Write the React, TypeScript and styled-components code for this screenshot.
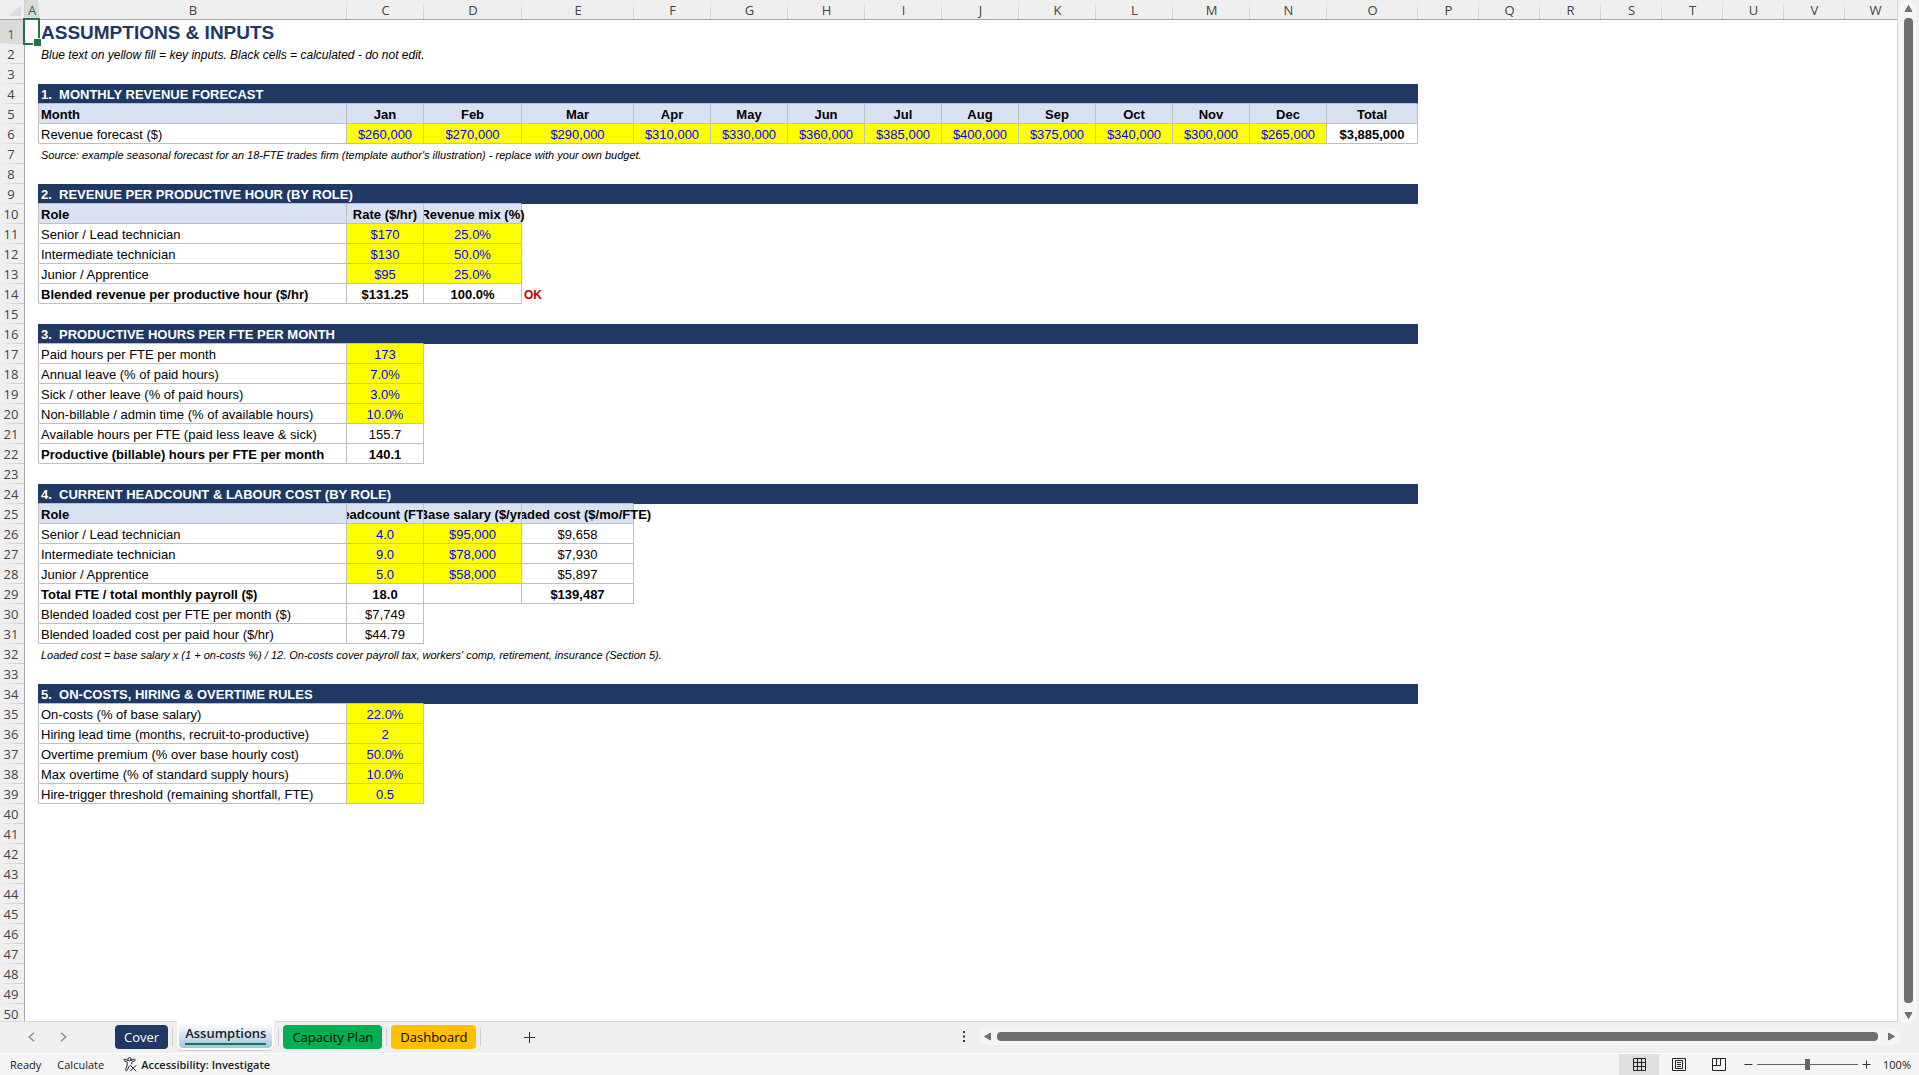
import React, { useState } from "react";
import styled, { createGlobalStyle, css } from "styled-components";

const NAVY = "#203864";
const LINE = "#bfbfbf";
const UI_FONT = '"Open Sans", "Noto Sans", sans-serif';
const CELL_FONT = '"Liberation Sans", Arial, sans-serif';

const GlobalStyle = createGlobalStyle`
  * { box-sizing: border-box; }
  body { margin: 0; background: #efefef; }
  button { font: inherit; color: inherit; border: 0; padding: 0; background: none; }
`;

/* ---------- sheet data ---------- */

type Kind = "label" | "total" | "head" | "headLeft" | "input" | "calc" | "calcBold";
type CellData = { text: string; kind: Kind; bleed?: boolean };
type RowData = {
  cells?: CellData[];
  band?: string;
  title?: string;
  subtitle?: string;
  note?: string;
  flag?: string;
};

const COLUMNS: [string, number][] = [
  ["A", 14], ["B", 308], ["C", 77], ["D", 98], ["E", 112], ["F", 77], ["G", 77], ["H", 77],
  ["I", 77], ["J", 77], ["K", 77], ["L", 77], ["M", 77], ["N", 77], ["O", 91], ["P", 61],
  ["Q", 61], ["R", 61], ["S", 61], ["T", 61], ["U", 61], ["V", 61], ["W", 61],
];
const ROW_COUNT = 50;
const BAND_SPAN = 14;

const label = (text: string): CellData => ({ text, kind: "label" });
const total = (text: string): CellData => ({ text, kind: "total" });
const head = (text: string, bleed = false): CellData => ({ text, kind: "head", bleed });
const headLeft = (text: string): CellData => ({ text, kind: "headLeft" });
const input = (text: string): CellData => ({ text, kind: "input" });
const calc = (text: string): CellData => ({ text, kind: "calc" });
const calcBold = (text: string): CellData => ({ text, kind: "calcBold" });

const ROWS: Record<number, RowData> = {
  1: { title: "ASSUMPTIONS & INPUTS" },
  2: { subtitle: "Blue text on yellow fill = key inputs. Black cells = calculated - do not edit." },
  4: { band: "1.  MONTHLY REVENUE FORECAST" },
  5: {
    cells: [
      headLeft("Month"),
      ...["Jan", "Feb", "Mar", "Apr", "May", "Jun", "Jul", "Aug", "Sep", "Oct", "Nov", "Dec", "Total"].map((m) => head(m)),
    ],
  },
  6: {
    cells: [
      label("Revenue forecast ($)"),
      ...[260, 270, 290, 310, 330, 360, 385, 400, 375, 340, 300, 265].map((n) => input(`$${n},000`)),
      calcBold("$3,885,000"),
    ],
  },
  7: { note: "Source: example seasonal forecast for an 18-FTE trades firm (template author's illustration) - replace with your own budget." },
  9: { band: "2.  REVENUE PER PRODUCTIVE HOUR (BY ROLE)" },
  10: { cells: [headLeft("Role"), head("Rate ($/hr)"), head("Revenue mix (%)", true)] },
  11: { cells: [label("Senior / Lead technician"), input("$170"), input("25.0%")] },
  12: { cells: [label("Intermediate technician"), input("$130"), input("50.0%")] },
  13: { cells: [label("Junior / Apprentice"), input("$95"), input("25.0%")] },
  14: { cells: [total("Blended revenue per productive hour ($/hr)"), calcBold("$131.25"), calcBold("100.0%")], flag: "OK" },
  16: { band: "3.  PRODUCTIVE HOURS PER FTE PER MONTH" },
  17: { cells: [label("Paid hours per FTE per month"), input("173")] },
  18: { cells: [label("Annual leave (% of paid hours)"), input("7.0%")] },
  19: { cells: [label("Sick / other leave (% of paid hours)"), input("3.0%")] },
  20: { cells: [label("Non-billable / admin time (% of available hours)"), input("10.0%")] },
  21: { cells: [label("Available hours per FTE (paid less leave & sick)"), calc("155.7")] },
  22: { cells: [total("Productive (billable) hours per FTE per month"), calcBold("140.1")] },
  24: { band: "4.  CURRENT HEADCOUNT & LABOUR COST (BY ROLE)" },
  25: { cells: [headLeft("Role"), head("Headcount (FTE)"), head("Base salary ($/yr)"), head("Loaded cost ($/mo/FTE)", true)] },
  26: { cells: [label("Senior / Lead technician"), input("4.0"), input("$95,000"), calc("$9,658")] },
  27: { cells: [label("Intermediate technician"), input("9.0"), input("$78,000"), calc("$7,930")] },
  28: { cells: [label("Junior / Apprentice"), input("5.0"), input("$58,000"), calc("$5,897")] },
  29: { cells: [total("Total FTE / total monthly payroll ($)"), calcBold("18.0"), calc(""), calcBold("$139,487")] },
  30: { cells: [label("Blended loaded cost per FTE per month ($)"), calc("$7,749")] },
  31: { cells: [label("Blended loaded cost per paid hour ($/hr)"), calc("$44.79")] },
  32: { note: "Loaded cost = base salary x (1 + on-costs %) / 12. On-costs cover payroll tax, workers' comp, retirement, insurance (Section 5)." },
  34: { band: "5.  ON-COSTS, HIRING & OVERTIME RULES" },
  35: { cells: [label("On-costs (% of base salary)"), input("22.0%")] },
  36: { cells: [label("Hiring lead time (months, recruit-to-productive)"), input("2")] },
  37: { cells: [label("Overtime premium (% over base hourly cost)"), input("50.0%")] },
  38: { cells: [label("Max overtime (% of standard supply hours)"), input("10.0%")] },
  39: { cells: [label("Hire-trigger threshold (remaining shortfall, FTE)"), input("0.5")] },
};

/* ---------- layout ---------- */

const Shell = styled.div`
  display: flex;
  flex-direction: column;
  height: 100vh;
  overflow: hidden;
  background: #efefef;
  font-family: ${UI_FONT};
`;

const Workspace = styled.main`
  display: flex;
  flex: 1;
  min-height: 0;
`;

const SheetView = styled.div`
  flex: 1;
  min-width: 0;
  overflow: hidden;
  background: #fff;
  border-right: 1px solid #d9d9d9;
  border-bottom: 1px solid #d9d9d9;
`;

const Grid = styled.table`
  table-layout: fixed;
  width: 0;
  border-collapse: separate;
  border-spacing: 0;
`;

const Corner = styled.td`
  height: 20px;
  padding: 5px 3px 3px 9px;
  background: #efefef;
  border-right: 1px solid #d0d0d0;
  border-bottom: 1px solid #a6a6a6;
  line-height: 0;
`;

const ColumnHead = styled.th<{ $active?: boolean }>`
  height: 20px;
  padding: 1px 0 0;
  font-size: 13px;
  font-weight: 400;
  line-height: 18px;
  text-align: center;
  color: ${(p) => (p.$active ? "#217346" : "#444")};
  background:
    linear-gradient(#efefef, #c8c8c8) right / 1px 100% no-repeat,
    ${(p) => (p.$active ? "#dadada" : "#efefef")};
  border-bottom: 1px solid #a6a6a6;
`;

const RowHead = styled.th<{ $active?: boolean }>`
  padding: 0 2px 1px 0;
  font-size: 13px;
  font-weight: 400;
  line-height: 18px;
  text-align: center;
  vertical-align: bottom;
  color: ${(p) => (p.$active ? "#217346" : "#444")};
  background:
    linear-gradient(90deg, #efefef, #c8c8c8) bottom / 100% 1px no-repeat,
    ${(p) => (p.$active ? "#dadada" : "#efefef")};
  border-right: 1px solid #a6a6a6;
`;

const kindStyles: Record<Kind, ReturnType<typeof css>> = {
  label: css``,
  total: css`font-weight: 700;`,
  headLeft: css`font-weight: 700; background: #d9e1f2;`,
  head: css`padding-left: 0; font-weight: 700; background: #d9e1f2;`,
  input: css`padding-left: 0; color: #0000ff; background: #ffff00;`,
  calc: css`padding-left: 0;`,
  calcBold: css`padding-left: 0; font-weight: 700;`,
};

const Cell = styled.td<{ $kind?: Kind; $right?: string; $bottom?: string }>`
  position: relative;
  height: 20px;
  padding: 2px 0 0 2px;
  font-family: ${CELL_FONT};
  font-size: 13px;
  line-height: 17px;
  white-space: pre;
  color: #000;
  border-right: 1px solid ${(p) => p.$right ?? "transparent"};
  border-bottom: 1px solid ${(p) => p.$bottom ?? "transparent"};
  ${(p) => p.$kind && kindStyles[p.$kind]}
`;

const Centered = styled.span<{ $bleed?: boolean }>`
  display: flex;
  justify-content: center;
  clip-path: inset(0 ${(p) => (p.$bleed ? "-60px" : "0")} 0 0);
`;

const BandCell = styled(Cell)`
  font-weight: 700;
  color: #fff;
  background: ${NAVY};
`;

const TitleCell = styled(Cell)`
  height: 24px;
  padding-top: 2px;
  font-size: 19px;
  font-weight: 700;
  line-height: 21px;
  color: ${NAVY};
`;

const SubtitleCell = styled(Cell)`
  padding-top: 3px;
  font-size: 12px;
  font-style: italic;
  line-height: 16px;
`;

const NoteCell = styled(Cell)`
  padding-top: 3px;
  font-size: 11px;
  font-style: italic;
  line-height: 16px;
`;

const FlagCell = styled(Cell)`
  padding-top: 3px;
  font-size: 12px;
  font-weight: 700;
  line-height: 16px;
  color: #c00000;
`;

const Selection = styled.span`
  position: absolute;
  inset: -2px;
  z-index: 1;
  border: 2px solid #217346;

  &::after {
    content: "";
    position: absolute;
    right: -4px;
    bottom: -4px;
    width: 7px;
    height: 7px;
    background: #217346;
    border: 1px solid #fff;
  }
`;

/* ---------- scroll bars ---------- */

const ScrollTrack = styled.div<{ $vertical?: boolean }>`
  display: flex;
  flex-direction: ${(p) => (p.$vertical ? "column" : "row")};
  align-items: center;
  justify-content: space-between;
  gap: 5px;
  padding: ${(p) => (p.$vertical ? "4px 0" : "0 4px")};
  background: #f5f5f5;
  border-radius: 9px;
  ${(p) => (p.$vertical ? css`width: 18px; margin: 0 2px 0 1px;` : css`height: 17px; flex: 1;`)}
`;

const VerticalRail = styled.div`
  display: flex;
  margin-bottom: -2px;
`;

const Thumb = styled.div<{ $vertical?: boolean }>`
  flex: 1;
  background: #707070;
  border-radius: 4px;
  ${(p) => (p.$vertical ? css`width: 9px; margin-bottom: 3px;` : css`height: 9px; margin-right: 4px;`)}
`;

const ArrowButton = styled.button`
  display: flex;
  align-items: center;
  justify-content: center;
  width: 9px;
  height: 9px;
`;

/* ---------- tab bar ---------- */

const TabBar = styled.nav`
  display: flex;
  align-items: flex-start;
  height: 31px;
  padding-right: 19px;
  color: #222;
`;

const TabNav = styled.div`
  display: flex;
  align-items: center;
  gap: 16px;
  width: 115px;
  height: 30px;
  padding-left: 23px;
`;

const NavButton = styled.button`
  display: flex;
  align-items: center;
  justify-content: center;
  width: 16px;
  height: 20px;
`;

const AddButton = styled(NavButton)`
  height: 30px;
`;

const Tabs = styled.div`
  display: flex;
  align-items: flex-start;
`;

const Tab = styled.button<{ $fill: string; $ink: string }>`
  height: 24px;
  margin-top: 3px;
  padding: 0 9px;
  font-size: 13px;
  line-height: 24px;
  white-space: nowrap;
  color: ${(p) => p.$ink};
  background: ${(p) => p.$fill};
  border-radius: 4px;
`;

const ActiveTab = styled.button`
  position: relative;
  height: 29px;
  margin-top: -1px;
  padding: 2px 6px 3px;
  font-size: 13px;
  font-weight: 600;
  line-height: 20px;
  white-space: nowrap;
  color: #222;
  background: linear-gradient(#fff 10%, #9dc3e6) padding-box, #fff;
  border: 2px solid #fff;
  border-top: 0;
  border-radius: 0 0 6px 6px;
  box-shadow: 0 1px 1px #cfcfcf;

  span {
    display: block;
    border-bottom: 2px solid #107c41;
  }
`;

const TabDivider = styled.span<{ $wide?: boolean }>`
  width: 1px;
  height: 18px;
  margin: 6px ${(p) => (p.$wide ? "40px" : "4px")} 0 4px;
  background: #cfcfcf;
`;

const Spacer = styled.div`
  flex: 1;
`;

const HorizontalRail = styled.div`
  display: flex;
  align-items: center;
  gap: 14px;
  width: calc(50% - 13px);
  height: 29px;
`;

/* ---------- status bar ---------- */

const StatusBar = styled.footer`
  display: flex;
  align-items: center;
  height: 22px;
  padding: 0 8px 0 10px;
  font-size: 11px;
  line-height: 20px;
  color: #222;
  background: #f4f4f4;
  border-top: 1px solid #fff;
`;

const StatusText = styled.span`
  margin-right: 16px;
`;

const AccessibilityButton = styled.button`
  display: flex;
  align-items: center;
  gap: 3px;
  margin-left: 3px;
  font-weight: 600;
`;

const ViewButton = styled.button<{ $active?: boolean }>`
  display: flex;
  align-items: center;
  justify-content: center;
  width: 40px;
  height: 21px;
  background: ${(p) => (p.$active ? "#dedede" : "transparent")};
`;

const ZoomControls = styled.div`
  display: flex;
  align-items: center;
  gap: 4px;
  margin-left: 5px;
`;

const ZoomSlider = styled.input`
  appearance: none;
  width: 101px;
  height: 21px;
  margin: 0;
  background: linear-gradient(#666, #666) center / 100% 1px no-repeat;

  &::-webkit-slider-thumb {
    appearance: none;
    width: 5px;
    height: 11px;
    background: #666;
  }
`;

const ZoomValue = styled.button`
  width: 36px;
  font-size: 11px;
  text-align: right;
`;

/* ---------- pieces ---------- */

type Direction = "up" | "down" | "left" | "right";
const ARROWS: Record<Direction, string> = {
  up: "M4.5 1.5 L8 7.5 L1 7.5 Z",
  down: "M1 1.5 L8 1.5 L4.5 7.5 Z",
  left: "M7.5 1 L7.5 8 L1.5 4.5 Z",
  right: "M1.5 1 L7.5 4.5 L1.5 8 Z",
};

function ScrollArrow({ direction }: { direction: Direction }) {
  return (
    <ArrowButton aria-label={`Scroll ${direction}`}>
      <svg width="9" height="9" viewBox="0 0 9 9">
        <path d={ARROWS[direction]} fill="#707070" stroke="#707070" strokeLinejoin="round" />
      </svg>
    </ArrowButton>
  );
}

const isLeftAligned = (kind: Kind) => kind === "label" || kind === "total" || kind === "headLeft";

function RowContent({ row, next }: { row: RowData; next: RowData }) {
  if (row.band) {
    // Columns with a table below get its grey top rule; the rest of the band stays solid.
    const lined = next.cells?.length ?? 1;
    return (
      <>
        <BandCell colSpan={lined} $bottom={LINE} $right={NAVY}>{row.band}</BandCell>
        {lined < BAND_SPAN && <BandCell colSpan={BAND_SPAN - lined} $bottom={NAVY} $right={NAVY} />}
      </>
    );
  }
  if (row.title) return <TitleCell colSpan={BAND_SPAN}>{row.title}</TitleCell>;
  if (row.subtitle) return <SubtitleCell colSpan={BAND_SPAN}>{row.subtitle}</SubtitleCell>;
  if (row.note) return <NoteCell colSpan={BAND_SPAN}>{row.note}</NoteCell>;
  if (row.cells) {
    return (
      <>
        {row.cells.map((cell, i) => (
          <Cell key={i} $kind={cell.kind} $right={LINE} $bottom={LINE}>
            {isLeftAligned(cell.kind) ? cell.text : <Centered $bleed={cell.bleed}>{cell.text}</Centered>}
          </Cell>
        ))}
        {row.flag && <FlagCell>{row.flag}</FlagCell>}
      </>
    );
  }
  return <Cell colSpan={BAND_SPAN} />;
}

function SheetRow({ index }: { index: number }) {
  const row = ROWS[index] ?? {};
  const next = ROWS[index + 1] ?? {};
  const edge = row.band ? NAVY : row.cells ? LINE : undefined;
  return (
    <tr>
      <RowHead scope="row" $active={index === 1}>{index}</RowHead>
      <Cell $right={edge}>{index === 1 && <Selection />}</Cell>
      <RowContent row={row} next={next} />
    </tr>
  );
}

function AccessibilityIcon() {
  return (
    <svg width="15" height="15" viewBox="0 0 15 15" fill="none" stroke="#222" strokeLinecap="round" strokeLinejoin="round">
      <circle cx="6.5" cy="2.2" r="1.6" />
      <path d="M4.8 3.4 L2 2.2 C.8 1.9 .4 3.4 1.4 3.8 L4.2 5.2 V8 L2.6 12.4 C2.4 13.8 3.8 14.2 4.3 13.1 L6.4 9" />
      <path d="M8.2 3.4 L11 2.2 C12.2 1.9 12.6 3.4 11.6 3.8 L8.8 5.2 V7" />
      <path d="M7.5 8.5 L13 14 M13 8.5 L7.5 14" />
    </svg>
  );
}

export default function App() {
  const [zoom, setZoom] = useState(100);
  const rows = Array.from({ length: ROW_COUNT }, (_, i) => i + 1);

  return (
    <Shell>
      <GlobalStyle />
      <Workspace>
        <SheetView>
          <Grid>
            <colgroup>
              <col width={25} />
              {COLUMNS.map(([name, width]) => <col key={name} width={width} />)}
            </colgroup>
            <thead>
              <tr>
                <Corner>
                  <svg width="12" height="11" viewBox="0 0 12 11"><path d="M12 0 V11 H0 Z" fill="#dcdcdc" /></svg>
                </Corner>
                {COLUMNS.map(([name]) => (
                  <ColumnHead key={name} scope="col" $active={name === "A"}>{name}</ColumnHead>
                ))}
              </tr>
            </thead>
            <tbody>
              {rows.map((n) => <SheetRow key={n} index={n} />)}
            </tbody>
          </Grid>
        </SheetView>
        <VerticalRail>
          <ScrollTrack $vertical>
            <ScrollArrow direction="up" />
            <Thumb $vertical />
            <ScrollArrow direction="down" />
          </ScrollTrack>
        </VerticalRail>
      </Workspace>

      <TabBar aria-label="Sheets">
        <TabNav>
          <NavButton aria-label="Previous sheet">
            <svg width="7" height="10" viewBox="0 0 7 10" fill="none" stroke="#8a8a8a" strokeWidth="1.3"><path d="M6 .8 L1.2 5 L6 9.2" /></svg>
          </NavButton>
          <NavButton aria-label="Next sheet">
            <svg width="7" height="10" viewBox="0 0 7 10" fill="none" stroke="#8a8a8a" strokeWidth="1.3"><path d="M1 .8 L5.8 5 L1 9.2" /></svg>
          </NavButton>
        </TabNav>
        <Tabs>
          <Tab $fill={NAVY} $ink="#fff">Cover</Tab>
          <TabDivider />
          <ActiveTab aria-current="page"><span>Assumptions</span></ActiveTab>
          <TabDivider />
          <Tab $fill="#00b050" $ink="#000">Capacity Plan</Tab>
          <TabDivider />
          <Tab $fill="#ffc000" $ink="#000">Dashboard</Tab>
          <TabDivider $wide />
        </Tabs>
        <AddButton aria-label="New sheet">
          <svg width="11" height="11" viewBox="0 0 11 11" stroke="#333"><path d="M5.5 0 V11 M0 5.5 H11" /></svg>
        </AddButton>
        <Spacer />
        <HorizontalRail>
          <svg width="2" height="11" viewBox="0 0 2 11" fill="#333"><path d="M0 0h2v2H0zM0 4.5h2v2H0zM0 9h2v2H0z" /></svg>
          <ScrollTrack>
            <ScrollArrow direction="left" />
            <Thumb />
            <ScrollArrow direction="right" />
          </ScrollTrack>
        </HorizontalRail>
      </TabBar>

      <StatusBar>
        <StatusText>Ready</StatusText>
        <StatusText>Calculate</StatusText>
        <AccessibilityButton><AccessibilityIcon />Accessibility: Investigate</AccessibilityButton>
        <Spacer />
        <ViewButton $active aria-label="Normal view">
          <svg width="13" height="13" viewBox="0 0 13 13" fill="none" stroke="#222"><path d="M.5 .5h12v12H.5zM4.5 .5v12M8.5 .5v12M.5 4.5h12M.5 8.5h12" /></svg>
        </ViewButton>
        <ViewButton aria-label="Page layout view">
          <svg width="14" height="13" viewBox="0 0 14 13" fill="none" stroke="#222"><path d="M.5 .5h13v12H.5zM3.5 2.5h7v8h-7zM5 4.5h4M5 6.5h4M5 8.5h4" /></svg>
        </ViewButton>
        <ViewButton aria-label="Page break preview">
          <svg width="14" height="13" viewBox="0 0 14 13" fill="none" stroke="#222"><path d="M.5 .5h13v12H.5zM.5 7.5h8v-7M4.5 .5v7" /></svg>
        </ViewButton>
        <ZoomControls>
          <ArrowButton aria-label="Zoom out" onClick={() => setZoom((z) => Math.max(10, z - 10))}>
            <svg width="9" height="9" viewBox="0 0 9 9" stroke="#333"><path d="M.5 4.5h8" /></svg>
          </ArrowButton>
          <ZoomSlider type="range" aria-label="Zoom" min={10} max={190} value={zoom} onChange={(e) => setZoom(Number(e.target.value))} />
          <ArrowButton aria-label="Zoom in" onClick={() => setZoom((z) => Math.min(190, z + 10))}>
            <svg width="9" height="9" viewBox="0 0 9 9" stroke="#333"><path d="M.5 4.5h8M4.5 .5v8" /></svg>
          </ArrowButton>
          <ZoomValue>{zoom}%</ZoomValue>
        </ZoomControls>
      </StatusBar>
    </Shell>
  );
}
